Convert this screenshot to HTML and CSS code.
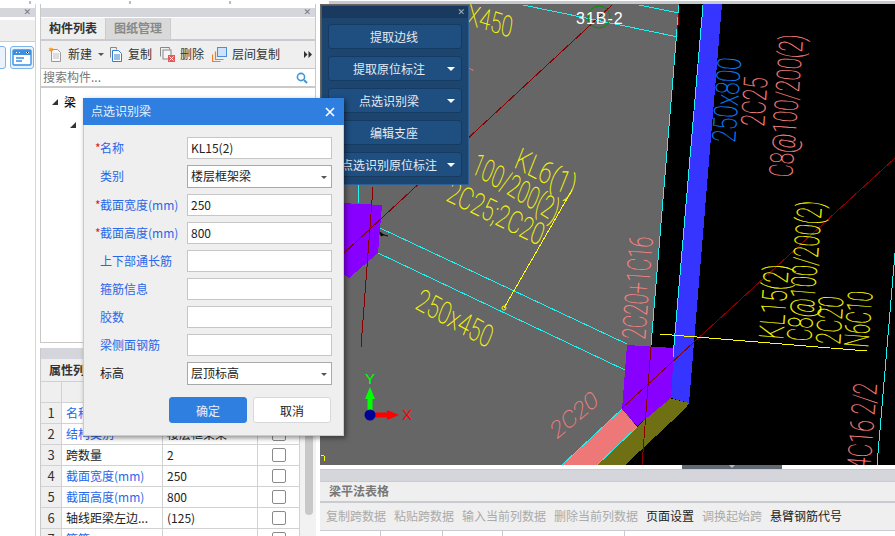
FILE: index.html
```html
<!DOCTYPE html>
<html lang="zh">
<head>
<meta charset="utf-8">
<title>点选识别梁</title>
<link rel="stylesheet" href="styles.css">
</head>
<body>
<div class="topstrip"><i class="cell c1"></i><i class="cell"></i><i class="cell"></i><i class="cell"></i></div>
<div class="main">
  <aside class="sidecol">
    <div class="grip"><span class="closex">✕</span></div>
    <div class="sidetabs"></div>
    <div class="sidebtns">
      <span class="sidebtn cut"></span>
      <span class="sidebtn">
        <svg width="20" height="18" viewBox="0 0 20 18"><rect x="1" y="1" width="18" height="15" rx="1" fill="#fff" stroke="#3d8fe0" stroke-width="1.4"/><rect x="1" y="1" width="18" height="5" fill="#3d8fe0"/><path d="M4 9h8M4 12h6" stroke="#3d8fe0" stroke-width="1.3"/><path d="M4 3.5h1M7 3.5h1M14 3l1.5 1.5L17 3" stroke="#fff"/></svg>
      </span>
    </div>
  </aside>

  <section class="midcol">
    <div class="panel listpanel">
      <div class="grip"><span class="closex">✕</span></div>
      <div class="tabs">
        <span class="tab active">构件列表</span>
        <span class="tab">图纸管理</span>
      </div>
      <div class="tools">
        <span class="tool t-new">
          <svg width="15" height="15" viewBox="0 0 15 15"><path d="M3.5 2.5h6l3 3v9h-9z" fill="#f7f7f7" stroke="#9a9a9a"/><path d="M5 7h6M5 9h6M5 11h6" stroke="#c4c4c4"/><path d="M3 0l.7 1.6L5.5 1 4.4 2.6 5.5 4.2 3.7 3.7 3 5.4 2.3 3.7.5 4.2 1.6 2.6.5 1l1.8.6z" fill="#f39a2c"/></svg>新建<b class="mini-caret"></b>
        </span>
        <span class="tool t-copy">
          <svg width="14" height="15" viewBox="0 0 14 15"><path d="M1.5.5h6v2" fill="none" stroke="#888"/><path d="M1.5.5v10" stroke="#888"/><path d="M3.5 3.5h6l3 3v8h-9z" fill="#fff" stroke="#2f7ed1"/><path d="M5 8h6M5 10h6M5 12h6" stroke="#2f7ed1"/></svg>复制
        </span>
        <span class="tool t-del">
          <svg width="15" height="15" viewBox="0 0 15 15"><path d="M.5 9.5v-9h9v2" fill="none" stroke="#888"/><rect x="3" y="3" width="8" height="9" fill="#f4f4f4" stroke="#888"/><rect x="8" y="8" width="7" height="7" fill="#dd5a5a"/><path d="M9.5 9.5l4 4M13.5 9.5l-4 4" stroke="#fff"/></svg>删除
        </span>
        <span class="tool t-floor">
          <svg width="15" height="15" viewBox="0 0 15 15"><rect x="5.5" y=".5" width="9" height="9" fill="#cfe2fa" stroke="#4a8fdc"/><path d="M3.5 4.5v8h8M.5 7.5v7h8" fill="none" stroke="#ef7d22" stroke-width="1.2"/></svg>层间复制
        </span>
        <span class="more">
          <svg width="8" height="7" viewBox="0 0 8 7"><path d="M0 0l3.5 3.5L0 7zM4.5 0L8 3.5 4.5 7z" fill="#333"/></svg>
        </span>
      </div>
      <div class="search">
        <span>搜索构件...</span>
        <svg width="12" height="12" viewBox="0 0 12 12"><circle cx="5" cy="5" r="3.6" fill="none" stroke="#3f97d8" stroke-width="1.6"/><path d="M8 8l3 3" stroke="#3f97d8" stroke-width="2"/></svg>
      </div>
      <div class="tree">
        <div class="node"><b class="tri"></b>梁</div>
        <div class="node sub"><b class="tri"></b></div>
      </div>
    </div>

    <div class="panel proppanel">
      <div class="grip"></div>
      <div class="tabs plain"><span class="tab active">属性列表</span></div>
      <div class="propbody">
        <div class="proptable">
          <div class="no"></div><div class="name"></div><div class="val"></div><div class="chk"></div>
          <div class="no">1</div><div class="name link">名称</div><div class="val"></div><div class="chk"></div>
          <div class="no">2</div><div class="name link">结构类别</div><div class="val">楼层框架梁</div><div class="chk"><i></i></div>
          <div class="no">3</div><div class="name">跨数量</div><div class="val">2</div><div class="chk"><i></i></div>
          <div class="no">4</div><div class="name link">截面宽度(mm)</div><div class="val">250</div><div class="chk"><i></i></div>
          <div class="no">5</div><div class="name link">截面高度(mm)</div><div class="val">800</div><div class="chk"><i></i></div>
          <div class="no">6</div><div class="name">轴线距梁左边...</div><div class="val">(125)</div><div class="chk"><i></i></div>
          <div class="no">7</div><div class="name link">箍筋</div><div class="val"></div><div class="chk"><i></i></div>
        </div>
        <div class="scroll"><i></i></div>
      </div>
    </div>
  </section>

  <section class="rightcol">
    <div class="canvas">
      <svg class="cad" width="575" height="461" viewBox="320 4 575 461">
        <rect x="320" y="4" width="575" height="461" fill="#666"/>
        <polygon class="crisp" points="679,4 895,4 895,465 625,465 651,345" fill="#000"/>
        <polygon class="crisp" points="703,4 722,4 689,403 671,398 673,357" fill="#3535ff"/>
        <polygon class="crisp" points="622,409 637,427 597,465 562,465" fill="#ee7777"/>
        <polygon class="crisp" points="637,427 669,398 689,403 686,408 625,465 597,465" fill="#6f6f14"/>
        <polygon class="crisp" points="627,345 674,348 671,398 637,426 622,409" fill="#8800ff"/>
        <polygon class="crisp" points="340,203 382,205 378,253 349,278 340,272" fill="#8800ff"/>

        <g class="cy">
          <path d="M523 5L678 37M639 5L679 13"/>
          <path d="M679 5L651 345"/>
          <path d="M703 5L673 357"/>
          <path d="M380 228L627 344M378 253L625 370"/>
          <path d="M622 409L562 465M637 427L597 465"/>
          <path d="M895 253L877 465"/>
          <path d="M359 185L358 203"/>
        </g>
        <g class="rd">
          <path d="M612 5L344 253"/>
          <path d="M895 158L622 408"/>
          <path d="M651 347L642 465"/>
          <path d="M373 187L361 347"/>
          <path d="M679 13L677 37"/>
        </g>
        <g class="yl">
          <path d="M660 334L867 351"/>
          <path d="M572 190L504 308"/>
          <circle cx="504" cy="308" r="2"/>
          <path d="M321 455l3 1v5"/>
        </g>
        <path d="M380 232l4 3 4 1-4-1-3 1z" fill="#000" stroke="#000" stroke-width=".6"/>

        <circle class="grn" cx="599" cy="17" r="11"/>
        <text class="label" x="576" y="24">31B-2</text>

        <g class="t-blue"><text transform="matrix(.16,-2.25,3.24,.26,735,143)">250x800</text></g>
        <g class="t-pink">
          <text transform="matrix(.15,-2.14,3.24,.26,764,127)">2C25</text>
          <text transform="matrix(.16,-2.06,3.24,.26,792,178)">C8@100/200(2)</text>
          <text transform="matrix(.17,-2.15,3.24,.26,870,470)">4C16 2/2</text>
          <text transform="matrix(.15,-2,3.24,.26,645,340)">2C20+1C16</text>
          <text transform="matrix(1.9,-1.6,1,2,556,440)">2C20</text>
          <text transform="matrix(.5,-1,2.2,.4,468,70)">)</text>
        </g>
        <g class="t-yel">
          <text transform="matrix(.17,-2.2,3.4,.26,783,340)">KL15(2)</text>
          <text transform="matrix(.16,-2.02,3.4,.26,811,342)">C8@100/200(2)</text>
          <text transform="matrix(.15,-2.1,3.4,.26,840,345)">2C20</text>
          <text transform="matrix(.15,-1.87,3.4,.26,868,348)">N6C10</text>
          <text transform="matrix(1.96,1.07,-1.13,2.82,414,308)">250x450</text>
          <text transform="matrix(2.05,1.07,-1.13,2.82,513,167)">KL6(1)</text>
          <text transform="matrix(1.75,1.05,-1.13,2.82,470,172)">100/200(2)</text>
          <text transform="matrix(1.98,.96,-1.13,2.82,445,200)">2C25;2C20</text>
          <text transform="matrix(2,.6,-.5,2.82,466,24)">X450</text>
        </g>

        <path d="M370 415V398" stroke="#00ff00" stroke-width="5"/>
        <path d="M370 387l5 12h-10z" fill="#00ff00"/>
        <path d="M370 415H390" stroke="#ff0000" stroke-width="5"/>
        <path d="M399 415l-12 5v-10z" fill="#ff0000"/>
        <circle cx="370" cy="415" r="5.5" fill="#000099"/>
        <text class="axis ax-y" x="365" y="384">Y</text>
        <text class="axis ax-x" x="402" y="420">X</text>
      </svg>
    </div>
    <div class="splitter"><span class="handle"><b></b></span></div>
    <div class="bottompanel">
      <div class="grip"></div>
      <div class="bp-title">梁平法表格</div>
      <div class="bp-tools">
        <span class="off">复制跨数据</span>
        <span class="off">粘贴跨数据</span>
        <span class="off">输入当前列数据</span>
        <span class="off">删除当前列数据</span>
        <span>页面设置</span>
        <span class="off">调换起始跨</span>
        <span>悬臂钢筋代号</span>
      </div>
      <div class="bp-head"><i class="h1"></i><i class="h2"></i><i class="h3"></i><i class="h4"></i></div>
    </div>
  </section>
</div>

<div class="floatbar">
  <div class="fb-head"><span>✕</span></div>
  <div class="fb-btns">
    <button class="fb">提取边线</button>
    <button class="fb drop">提取原位标注</button>
    <button class="fb drop">点选识别梁</button>
    <button class="fb">编辑支座</button>
    <button class="fb drop">点选识别原位标注</button>
  </div>
</div>

<div class="dialog">
  <div class="dlg-title"><span>点选识别梁</span><span class="dlg-x">
    <svg width="10" height="10" viewBox="0 0 10 10"><path d="M1 1l8 8M9 1l-8 8" stroke="#fff" stroke-width="1.6"/></svg>
  </span></div>
  <div class="form">
    <label class="lb"><em>*</em>名称</label><div class="inp">KL15(2)</div>
    <label class="lb">类别</label><div class="inp sel">楼层框架梁</div>
    <label class="lb"><em>*</em>截面宽度(mm)</label><div class="inp">250</div>
    <label class="lb"><em>*</em>截面高度(mm)</label><div class="inp">800</div>
    <label class="lb">上下部通长筋</label><div class="inp"></div>
    <label class="lb">箍筋信息</label><div class="inp"></div>
    <label class="lb">胶数</label><div class="inp"></div>
    <label class="lb">梁侧面钢筋</label><div class="inp"></div>
    <label class="lb dark">标高</label><div class="inp sel">层顶标高</div>
  </div>
  <div class="dlg-btns">
    <button class="btn ok">确定</button>
    <button class="btn">取消</button>
  </div>
</div>
</body>
</html>
```
FILE: styles.css
```css
* { box-sizing: border-box; }
html, body { margin: 0; height: 100%; }
body {
  width: 895px; height: 536px; overflow: hidden; position: relative;
  background: #fff; color: #222;
  font: 12px/1.2 "Noto Sans CJK SC", "Liberation Sans", sans-serif;
  display: flex; flex-direction: column;
}
.topstrip { height: 4px; flex: none; display: flex; background: #c6c9ce; border-top: 1px solid #fff; }
.cell { width: 100px; height: 3px; background: #fff; border-left: 2px solid #b9bcc1; }
.cell.c1 { width: 29px; border-left: 0; }
.main { flex: 1; display: flex; min-height: 0; }

.grip { height: 9px; margin-top: 4px; background: #d4d6db; position: relative; flex: none; }
.closex { position: absolute; right: 4px; top: -1px; font-size: 9px; line-height: 10px; color: #777; font-family: "DejaVu Sans", sans-serif; }

.sidecol { width: 36px; flex: none; border-right: 1px solid #d5d5d5; }
.sidetabs { height: 22px; background: #efefef; border-bottom: 1px solid #ccc; margin-top: 3px; }
.sidebtns { display: flex; gap: 4px; margin-top: 4px; margin-left: -18px; }
.sidebtn { width: 24px; height: 23px; border: 1px solid #7db4ea; border-radius: 3px; background: #eaf3fc; display: flex; align-items: center; justify-content: center; flex: none; }

.midcol { width: 276px; flex: none; margin-left: 4px; display: flex; flex-direction: column; gap: 0; }
.panel { border-left: 1px solid #c9c9c9; border-right: 1px solid #c9c9c9; background: #fff; }
.listpanel { height: 339px; border-bottom: 1px solid #c9c9c9; display: flex; flex-direction: column; }
.tabs { height: 23px; background: #efefef; border-bottom: 2px solid #c9cbd0; display: flex; flex: none; margin-top: 1px; }
.tab { width: 65px; display: flex; align-items: center; justify-content: center; background: #d9d9d9; color: #888; font-weight: 700; border-right: 1px solid #ccc; white-space: nowrap; }
.tab.active { background: #efefef; color: #333; border-right: 1px solid #ccc; }
.tabs.plain .tab { width: 70px; justify-content: flex-start; padding-left: 8px; border: 0; }
.tools { height: 27px; background: #efefef; position: relative; display: flex; align-items: center; flex: none; padding-left: 7px; color: #333; }
.tool { display: inline-flex; align-items: center; gap: 5px; }
.t-copy { margin-left: 5px; }
.t-del { margin-left: 8px; }
.t-floor { margin-left: 8px; }
.more { margin-left: auto; margin-right: 3px; line-height: 0; }
.mini-caret { width: 0; height: 0; border: 3px solid transparent; border-top: 3px solid #555; border-bottom: 0; margin-left: 1px; }
.search { height: 20px; border-top: 1px solid #c9c9c9; border-bottom: 2px solid #c9c9c9; display: flex; align-items: center; justify-content: space-between; padding: 0 7px 0 2px; color: #777; flex: none; }
.tree { flex: 1; padding: 3px 0 0 11px; color: #111; }
.node { height: 22px; display: flex; align-items: center; gap: 6px; font-weight: 500; }
.node.sub { padding-left: 18px; height: 24px; }
.tri { width: 0; height: 0; border-style: solid; border-width: 0 0 6px 6px; border-color: transparent transparent #333 transparent; display: inline-block; }

.proppanel { margin-top: 5px; flex: 1; display: flex; flex-direction: column; min-height: 0; }
.proppanel .grip { margin-top: 0; height: 11px; }
.proppanel .tabs { margin-top: 0; height: 23px; border-bottom: 1px solid #d0d0d0; }
.propbody { flex: 1; display: flex; min-height: 0; }
.proptable { width: 259px; display: grid; grid-template-columns: 21px 101px 95px 42px; grid-auto-rows: 21px; flex: none; }
.proptable > div { border-right: 1px solid #d2d2d2; border-bottom: 1px solid #d2d2d2; display: flex; align-items: center; padding-left: 4px; height: 21px; font-size: 12px; }
.proptable .no { background: #efefef; justify-content: center; padding: 0; color: #333; font-size: 13px; }
.proptable > div:nth-child(-n+4) { background: #efefef; }
.proptable .link { color: #2a66e8; }
.proptable .chk { justify-content: center; padding: 0; }
.proptable .chk i { width: 14px; height: 14px; border: 1px solid #8a8a8a; border-radius: 2px; background: #fff; display: block; }
.scroll { flex: 1; background: #f2f2f2; padding: 0 3px 0 5px; margin-left: 0; }
.scroll i { display: block; width: 8px; height: 133px; background: #c8c8c8; border-radius: 4px; }

.rightcol { flex: 1; margin-left: 4px; display: flex; flex-direction: column; min-width: 0; }
.canvas { height: 461px; flex: none; overflow: hidden; }
.cad { display: block; }
.crisp { shape-rendering: crispEdges; }
.cy path { stroke: #1ff0f0; fill: none; shape-rendering: crispEdges; }
.rd path { stroke: #8a0000; fill: none; shape-rendering: crispEdges; }
.yl path, .yl circle { stroke: #ffff00; fill: none; }
.yl path { shape-rendering: crispEdges; }
.grn { fill: none; stroke: #0a8a0a; }
.label { fill: #fff; font: 16px "Liberation Sans", sans-serif; letter-spacing: 1px; }
.cad text:not(.label):not(.axis) { font-family: Roboto, sans-serif; font-weight: 100; font-size: 10px; stroke-width: .08px; }
.t-blue text { fill: #0a84ff; stroke: #0a84ff; }
.t-pink text { fill: #ff8585; stroke: #ff8585; }
.t-yel text { fill: #ffff00; stroke: #ffff00; }
.axis { font: 15px "Liberation Sans", sans-serif; }
.ax-y { fill: #00ff00; }
.ax-x { fill: #ff0000; }

.splitter { height: 4px; flex: none; background: #fff; position: relative; }
.handle { position: absolute; left: 362px; top: 0; width: 100px; height: 4px; background: #5f6a75; display: flex; justify-content: center; }
.handle b { width: 0; height: 0; border: 3px solid transparent; border-top: 3px solid #bbb; border-bottom: 0; }
.bottompanel { flex: 1; border-top: 1px solid #c9cbd0; background: #efefef; min-height: 0; }
.bottompanel .grip { margin-top: 0; height: 11px; }
.bp-title { height: 22px; border-top: 1px solid #c9cbd0; border-bottom: 2px solid #c9cbd0; padding-left: 9px; display: flex; align-items: center; color: #777; font-weight: 700; }
.bp-tools { height: 28px; display: flex; align-items: center; gap: 8px; padding-left: 6px; border-bottom: 1px solid #c9cbd0; color: #222; }
.bp-tools .off { color: #aaa; }
.bp-head { height: 6px; background: #fff; display: flex; }
.bp-head i { height: 6px; border-right: 1px solid #c9cbd0; display: block; }
.h1 { width: 61px; } .h2 { width: 62px; } .h3 { width: 60px; } .h4 { width: 122px; }

.floatbar { position: absolute; left: 321px; top: 5px; width: 148px; height: 180px; background: #1c4570; border: 1px solid #2a5f99; }
.fb-head { height: 12px; background: #193a5e; color: #9db7d0; text-align: right; font: 9px/12px "DejaVu Sans", sans-serif; padding-right: 3px; }
.fb-btns { display: flex; flex-direction: column; gap: 7px; padding: 6px 6px 0 6px; }
.fb { height: 25px; width: 134px; padding: 0 2px 0 0; background: #1f4e80; border: 1px solid #173a60; border-radius: 3px; color: #e3ebf3; font: 12px "Noto Sans CJK SC", sans-serif; position: relative; }
.fb.drop { padding-right: 12px; white-space: nowrap; }
.fb.drop::after { content: ""; position: absolute; right: 6px; top: 10px; border: 4px solid transparent; border-top: 4px solid #fff; border-bottom: 0; }

.dialog { position: absolute; left: 83px; top: 98px; width: 261px; height: 338px; background: #efefef; border: 1px solid #c3cbe0; border-top: 0; box-shadow: 2px 2px 5px rgba(0,0,0,.45); }
.dlg-title { height: 27px; margin: 0 -1px; background: #2e7fe0; color: #e8f0fb; display: flex; align-items: center; justify-content: space-between; padding: 0 9px 0 8px; }
.dlg-x { line-height: 0; }
.form { display: grid; grid-template-columns: 103px 145px; row-gap: 6px; padding: 12px 0 0 0; align-items: center; }
.lb { padding-left: 16px; color: #2a66e8; white-space: nowrap; }
.lb.dark { color: #222; }
.lb em { color: #e02020; font-style: normal; margin-left: -5px; display: inline-block; width: 5px; }
.inp { height: 22px; background: #fff; border: 1px solid #c6c6c6; padding-left: 3px; line-height: 20px; color: #222; }
.sel { height: 23px; border-color: #a9a9a9; position: relative; }
.sel::after { content: ""; position: absolute; right: 4px; top: 10px; border: 3px solid transparent; border-top: 3px solid #555; border-bottom: 0; }
.dlg-btns { display: flex; justify-content: flex-end; gap: 6px; padding: 12px 12px 0 0; }
.btn { width: 78px; height: 26px; background: #fff; border: 1px solid #d8d8d8; border-radius: 3px; color: #222; font: 12px "Noto Sans CJK SC", sans-serif; }
.btn.ok { background: #2e7fe0; border-color: #2e7fe0; color: #e8f0fb; }
```
